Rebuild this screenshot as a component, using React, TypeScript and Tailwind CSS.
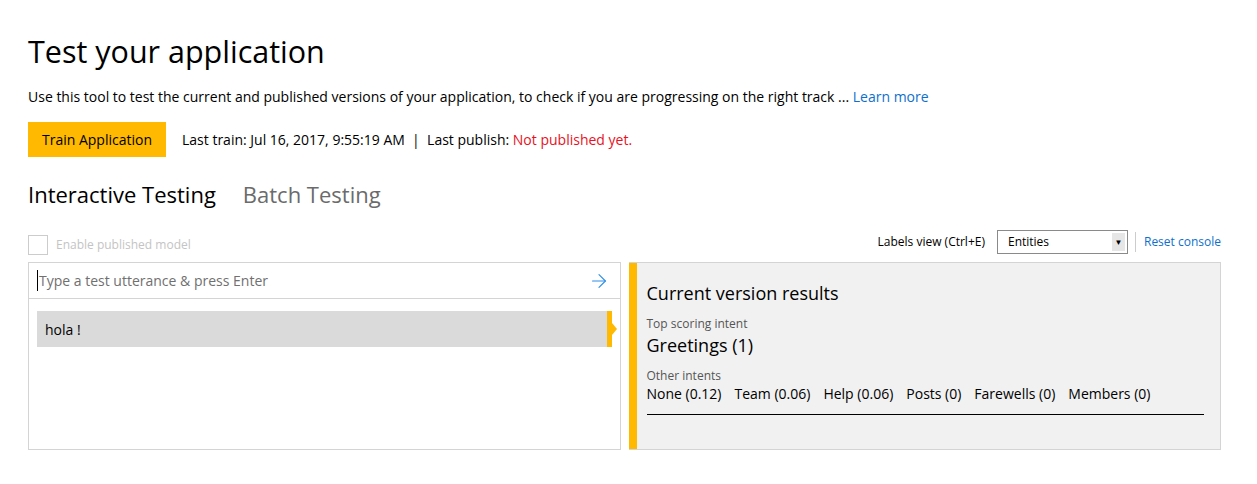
import { ArrowRight } from 'lucide-react'

const intents = [
  'None (0.12)',
  'Team (0.06)',
  'Help (0.06)',
  'Posts (0)',
  'Farewells (0)',
  'Members (0)',
]

export default function App() {
  return (
    <div
      className="h-[484px] overflow-hidden bg-white pl-[28px] pr-[36px] text-[#000]"
      style={{ fontFamily: '"Segoe UI", "Open Sans", sans-serif' }}
    >
      <h1 className="pt-[29px] text-[30.5px] leading-[44px] font-normal">Test your application</h1>

      <p className="mt-[14px] text-[14px] leading-[20px]">
        Use this tool to test the current and published versions of your application, to check if you are
        progressing on the right track ...{' '}
        <a className="text-[#0f6fcc]">Learn more</a>
      </p>

      <div className="mt-[15px] flex items-center">
        <button className="h-[35px] w-[138px] bg-[#ffb900] text-[14px]">Train Application</button>
        <span className="ml-[16px] text-[14px]">
          Last train: Jul 16, 2017, 9:55:19 AM&nbsp; |&nbsp; Last publish:{' '}
          <span className="text-[#e81123]">Not published yet.</span>
        </span>
      </div>

      <div className="mt-[21px] flex items-center gap-[27px] text-[22px] leading-[32px]">
        <span>Interactive Testing</span>
        <span className="text-[#6b6b6b]">Batch Testing</span>
      </div>

      <div className="mt-[20px] flex items-end justify-between">
        <label className="flex items-center gap-[8px] text-[12px] text-[#c4c4c4]">
          <span className="h-[20px] w-[20px] border border-[#cccccc]" />
          Enable published model
        </label>
        <div className="mb-[1px] flex items-center text-[12px]">
          <span>Labels view (Ctrl+E)</span>
          <div className="ml-[12px] flex h-[24px] w-[131px] items-center justify-between border border-[#8a8a8a] pl-[10px] pr-[2px]">
            <span>Entities</span>
            <span className="flex h-[18px] w-[13px] items-center justify-center bg-[#e6e6e6] text-[8px]">▼</span>
          </div>
          <span className="ml-[7px] h-[20px] w-px bg-[#cccccc]" />
          <a className="ml-[8px] text-[#0f6fcc]">Reset console</a>
        </div>
      </div>

      <div className="mt-[7px] flex gap-[8px]">
        <div className="h-[188px] w-[593px] border border-[#d4d4d4]">
          <div className="flex h-[36px] items-center justify-between border-b border-[#d4d4d4] pl-[8px] pr-[10px]">
            <span className="border-l border-black pl-[1px] text-[14px] text-[#707070]">
              Type a test utterance &amp; press Enter
            </span>
            <ArrowRight className="h-[22px] w-[22px] text-[#2f8fe6]" strokeWidth={1.25} />
          </div>
          <div className="pt-[12px] pl-[8px] pr-[8px]">
            <div className="relative flex h-[36px] items-center bg-[#dadada] pl-[8px] text-[14px]">
              hola !
              <span className="absolute top-0 right-0 h-full w-[5px] bg-[#ffb900]" />
              <span className="absolute top-[12px] right-[-5px] h-0 w-0 border-y-[6px] border-l-[5px] border-y-transparent border-l-[#ffb900]" />
            </div>
          </div>
        </div>

        <div className="flex h-[188px] w-[593px] border border-l-0 border-[#d4d4d4] bg-[#f1f1f1]">
          <div className="w-[8px] bg-[#ffb900]" />
          <div className="flex-1 pt-[17px] pl-[10px] pr-[16px]">
            <div className="text-[18px] leading-[26px]">Current version results</div>
            <div className="mt-[10px] text-[12px] leading-[16px] text-[#555]">Top scoring intent</div>
            <div className="text-[18px] leading-[26px]">Greetings (1)</div>
            <div className="mt-[10px] text-[12px] leading-[16px] text-[#555]">Other intents</div>
            <div className="flex gap-[13px] border-b border-black pb-[10px] text-[14px] leading-[20px]">
              {intents.map((i) => (
                <span key={i}>{i}</span>
              ))}
            </div>
          </div>
        </div>
      </div>
    </div>
  )
}
